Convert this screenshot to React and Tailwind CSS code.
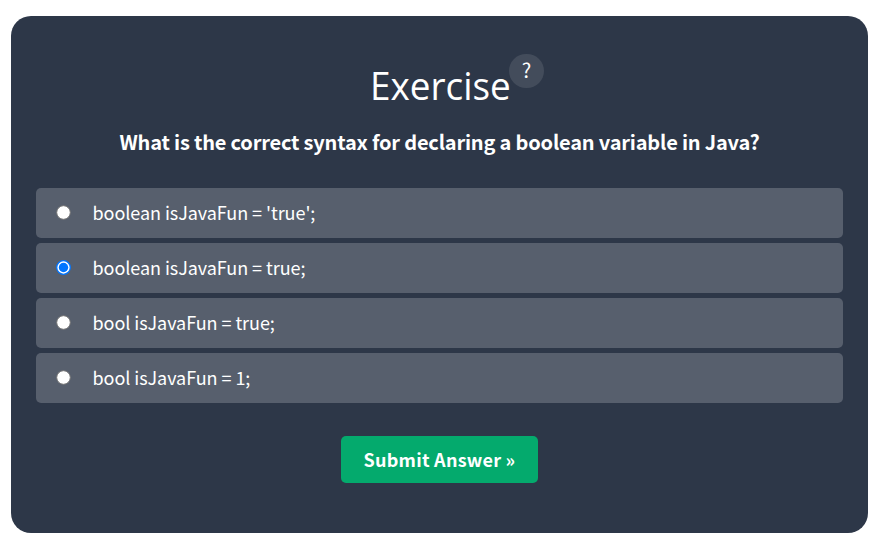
const options = [
  { text: "boolean isJavaFun = 'true';" },
  { text: "boolean isJavaFun = true;", selected: true },
  { text: "bool isJavaFun = true;" },
  { text: "bool isJavaFun = 1;" },
];

function Radio({ selected }) {
  return (
    <svg className="-mt-px h-[15px] w-[15px] shrink-0" viewBox="0 0 15 15">
      <circle cx="7.5" cy="7.5" r="6.8" fill="#fff" stroke={selected ? "#0075ff" : "#767676"} strokeWidth={selected ? 1.3 : 1} />
      {selected && <circle cx="7.5" cy="7.5" r="4.7" fill="#0075ff" />}
    </svg>
  );
}

export default function App() {
  return (
    <div className="h-[546px] w-[882px] overflow-hidden bg-white pt-4 pl-[11px] font-['Noto_Sans_CJK_SC','Noto_Sans',sans-serif] text-white">
      <main className="flex h-[517px] w-[857px] flex-col items-center rounded-[20px] bg-[#2d3748] px-[25px]">
        <header className="flex h-[98px] w-full items-start pt-[38px] pl-[334px]">
          <h1 className="w-[139px] origin-left scale-x-[0.945] pt-[3px] font-['Open_Sans','Noto_Sans',sans-serif] text-[39px] leading-[56px] whitespace-nowrap">Exercise</h1>
          <span className="flex h-[34px] w-[35px] shrink-0 items-center justify-center rounded-full bg-[#434c5b] pb-[3px] text-[20px]">?</span>
        </header>
        <p className="mt-[9px] text-[20px] leading-[37px] font-bold tracking-[-0.19px] whitespace-nowrap">What is the correct syntax for declaring a boolean variable in Java?</p>
        <div className="mt-[28px] flex w-full flex-col gap-[5px]">
          {options.map((option) => (
            <label key={option.text} className="flex h-[50px] items-center rounded-[5px] bg-[#575f6d] pl-[20px]">
              <Radio selected={option.selected} />
              <span className="ml-[21.5px] pb-[2px] text-[18px] leading-[48px] tracking-[-0.06px] whitespace-nowrap">{option.text}</span>
            </label>
          ))}
        </div>
        <button className="mt-[33px] flex h-[47px] w-[197px] items-center justify-center rounded-[5px] bg-[#04aa6d] text-[18px] font-bold tracking-[0.25px] whitespace-nowrap">Submit Answer »</button>
      </main>
    </div>
  );
}
